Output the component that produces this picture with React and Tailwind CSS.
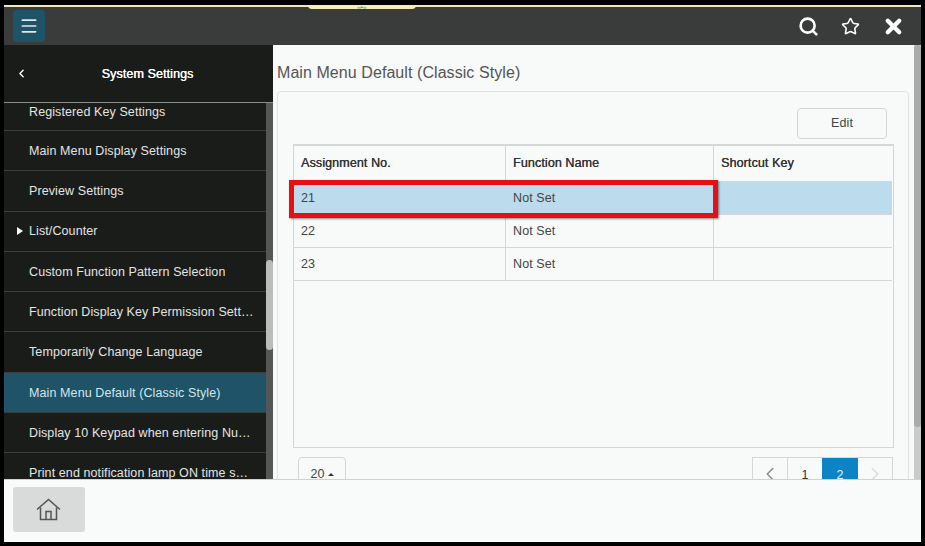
import { Search, Star, X, ChevronLeft, ChevronRight, Menu } from 'lucide-react';

const menuItems = [
  { label: 'Main Menu Display Settings' },
  { label: 'Preview Settings' },
  { label: 'List/Counter', arrow: true },
  { label: 'Custom Function Pattern Selection' },
  { label: 'Function Display Key Permission Settings' },
  { label: 'Temporarily Change Language' },
  { label: 'Main Menu Default (Classic Style)', active: true },
  { label: 'Display 10 Keypad when entering Numeric Values' },
  { label: 'Print end notification lamp ON time setting' },
];

const rows = ['21', '22', '23'];

function MenuRow({ label, arrow, active }) {
  return (
    <div className={`relative flex h-[40.3px] shrink-0 items-center border-b border-[#3b3d3b] pl-[25px] pr-[12px] pt-[1px] ${active ? 'bg-[#1f5368] text-[#d5e6ea]' : 'text-[#e3e5e3]'}`}>
      {arrow && <span className="absolute left-[13px] top-[15px] h-0 w-0 border-y-[4px] border-l-[6px] border-y-transparent border-l-white" />}
      <span className="truncate">{label}</span>
    </div>
  );
}

function HomeIcon() {
  return (
    <svg width="25" height="23" viewBox="0 0 25 23" fill="none" stroke="currentColor" strokeWidth="1.5">
      <path d="M1 11.5 12.5 1.5 24 11.5" />
      <path d="M4.5 9.5V21.5H20.5V9.5" />
      <path d="M10 21.5V13.5H15V21.5" />
    </svg>
  );
}

export default function App() {
  return (
    <div className="flex h-[546px] w-[925px] flex-col overflow-hidden bg-black pb-[4px] pl-[4px] pr-[4px] pt-[5px] font-['Liberation_Sans',Arial,sans-serif] text-[12.5px] tracking-[0.1px]">
      <div className="relative flex h-[40px] shrink-0 items-center justify-between border-t-[2px] border-[#f0e9b4] bg-[#393c3a] pr-[18px]">
        <div className="absolute left-[304px] top-[-2px] flex h-[4px] w-[108px] items-center justify-center rounded-b-sm bg-[#f5eeb8] text-[5px] leading-none text-[#444]">‹‹•››</div>
        <div className="ml-[9px] flex h-[32px] w-[32px] items-center justify-center rounded-[4px] bg-[#1f5368] text-[#dcebee]">
          <Menu size={20} strokeWidth={2} />
        </div>
        <div className="mr-[-2px] flex items-center gap-[22px] text-white">
          <Search size={21} strokeWidth={3} />
          <Star size={19} strokeWidth={2} />
          <X size={23} strokeWidth={4.5} />
        </div>
      </div>

      <div className="relative flex min-h-0 flex-1">
        <div className="flex w-[269px] shrink-0 flex-col bg-[#1a1c1a]">
          <div className="relative flex h-[58px] shrink-0 items-center justify-center border-b border-[#8a8c8a] pl-[18px] pt-[2px] text-white">
            <ChevronLeft size={13} strokeWidth={2.5} className="absolute left-[11px] top-[22px]" />
            <span className="[text-shadow:0.3px_0_0_white]">System Settings</span>
          </div>
          <div className="flex min-h-0 flex-1">
            <div className="min-w-0 flex-1 overflow-hidden">
              <div className="flex h-[28px] items-center border-b border-[#3b3d3b] pb-[9px] pl-[25px] text-[#e3e5e3]">Registered Key Settings</div>
              {menuItems.map((item) => <MenuRow key={item.label} {...item} />)}
            </div>
            <div className="relative w-[7px] shrink-0 bg-[#555755]">
              <div className="absolute left-0 top-[157px] h-[90px] w-[7px] rounded-full bg-[#b9bcba]" />
            </div>
          </div>
        </div>

        <div className="flex min-w-0 flex-1 overflow-hidden bg-[#f7faf8]">
          <div className="min-w-0 flex-1 pl-[4px] pr-[5px]">
            <h1 className="mb-[8px] mt-[18px] text-[16px] leading-[20px] tracking-[0.07px] text-[#555]">Main Menu Default (Classic Style)</h1>
            <div className="h-[500px] rounded-[4px] border border-[#dfe2e0] px-[14px] pt-[16px]">
              <div className="flex justify-end pr-[7px]">
                <button className="h-[31px] w-[90px] rounded-[4px] border border-[#d4d7d5] text-[#444]">Edit</button>
              </div>
              <div className="ml-[1px] mt-[5px] h-[304px] border border-t-2 border-[#d4d7d5] pr-[1px]">
                <div className="flex h-[36px] items-center border-b border-[#d4d7d5] text-[#333]">
                  <div className="flex h-full w-[212px] items-center border-r border-[#d4d7d5] pl-[7px]"><span className="[text-shadow:0.3px_0_0_#333]">Assignment No.</span></div>
                  <div className="flex h-full w-[208px] items-center border-r border-[#d4d7d5] pl-[7px]"><span className="[text-shadow:0.3px_0_0_#333]">Function Name</span></div>
                  <div className="pl-[7px]"><span className="[text-shadow:0.3px_0_0_#333]">Shortcut Key</span></div>
                </div>
                {rows.map((no, i) => (
                  <div key={no} className={`flex h-[33px] items-center border-b border-[#d4d7d5] text-[#444] ${i === 0 ? 'bg-[#bcdcee]' : ''}`}>
                    <div className="flex h-full w-[212px] items-center border-r border-[#d4d7d5] pl-[7px]">{no}</div>
                    <div className="flex h-full w-[208px] items-center border-r border-[#d4d7d5] pl-[7px]">Not Set</div>
                  </div>
                ))}
              </div>
              <div className="mt-[9px] flex items-start justify-between pl-[6px] pr-[1px]">
                <div className="flex h-[34px] w-[48px] items-center justify-center gap-[3px] rounded-[4px] border border-[#d4d7d5] text-[#444]">
                  20<span className="h-0 w-0 border-x-[3px] border-b-[3px] border-x-transparent border-b-[#333]" />
                </div>
                <div className="flex h-[34px] border border-[#d4d7d5] text-[#333]">
                  <div className="flex w-[35px] items-center justify-center border-r border-[#d4d7d5] text-[#888]"><ChevronLeft size={22} strokeWidth={1.5} /></div>
                  <div className="flex w-[34px] items-center justify-center pt-[3px]">1</div>
                  <div className="flex w-[36px] items-center justify-center bg-[#0c83c4] pt-[3px] text-[#e6f4fb]">2</div>
                  <div className="flex w-[34px] items-center justify-center text-[#d8dbd9]"><ChevronRight size={22} strokeWidth={1.5} /></div>
                </div>
              </div>
            </div>
          </div>
          <div className="relative w-[7px] shrink-0 bg-[#c8cbc9]">
            <div className="absolute left-0 top-0 h-[382px] w-[7px] rounded-full bg-[#a9acaa]" />
          </div>
        </div>

        <div className="pointer-events-none absolute left-[285px] top-[135px] h-[38px] w-[429px] border-[5px] border-[#e50f14] shadow-[1px_1px_2px_rgba(0,0,0,0.45)]" />
      </div>

      <div className="h-[63px] shrink-0 border-t border-[#cfd2d0] bg-[#f8fbf9] pl-[9px] pt-[7px]">
        <div className="flex h-[45px] w-[72px] items-center justify-center rounded-[3px] bg-[#d8dbd9] pb-[1px] pr-[2px] text-[#555]">
          <HomeIcon />
        </div>
      </div>
    </div>
  );
}
